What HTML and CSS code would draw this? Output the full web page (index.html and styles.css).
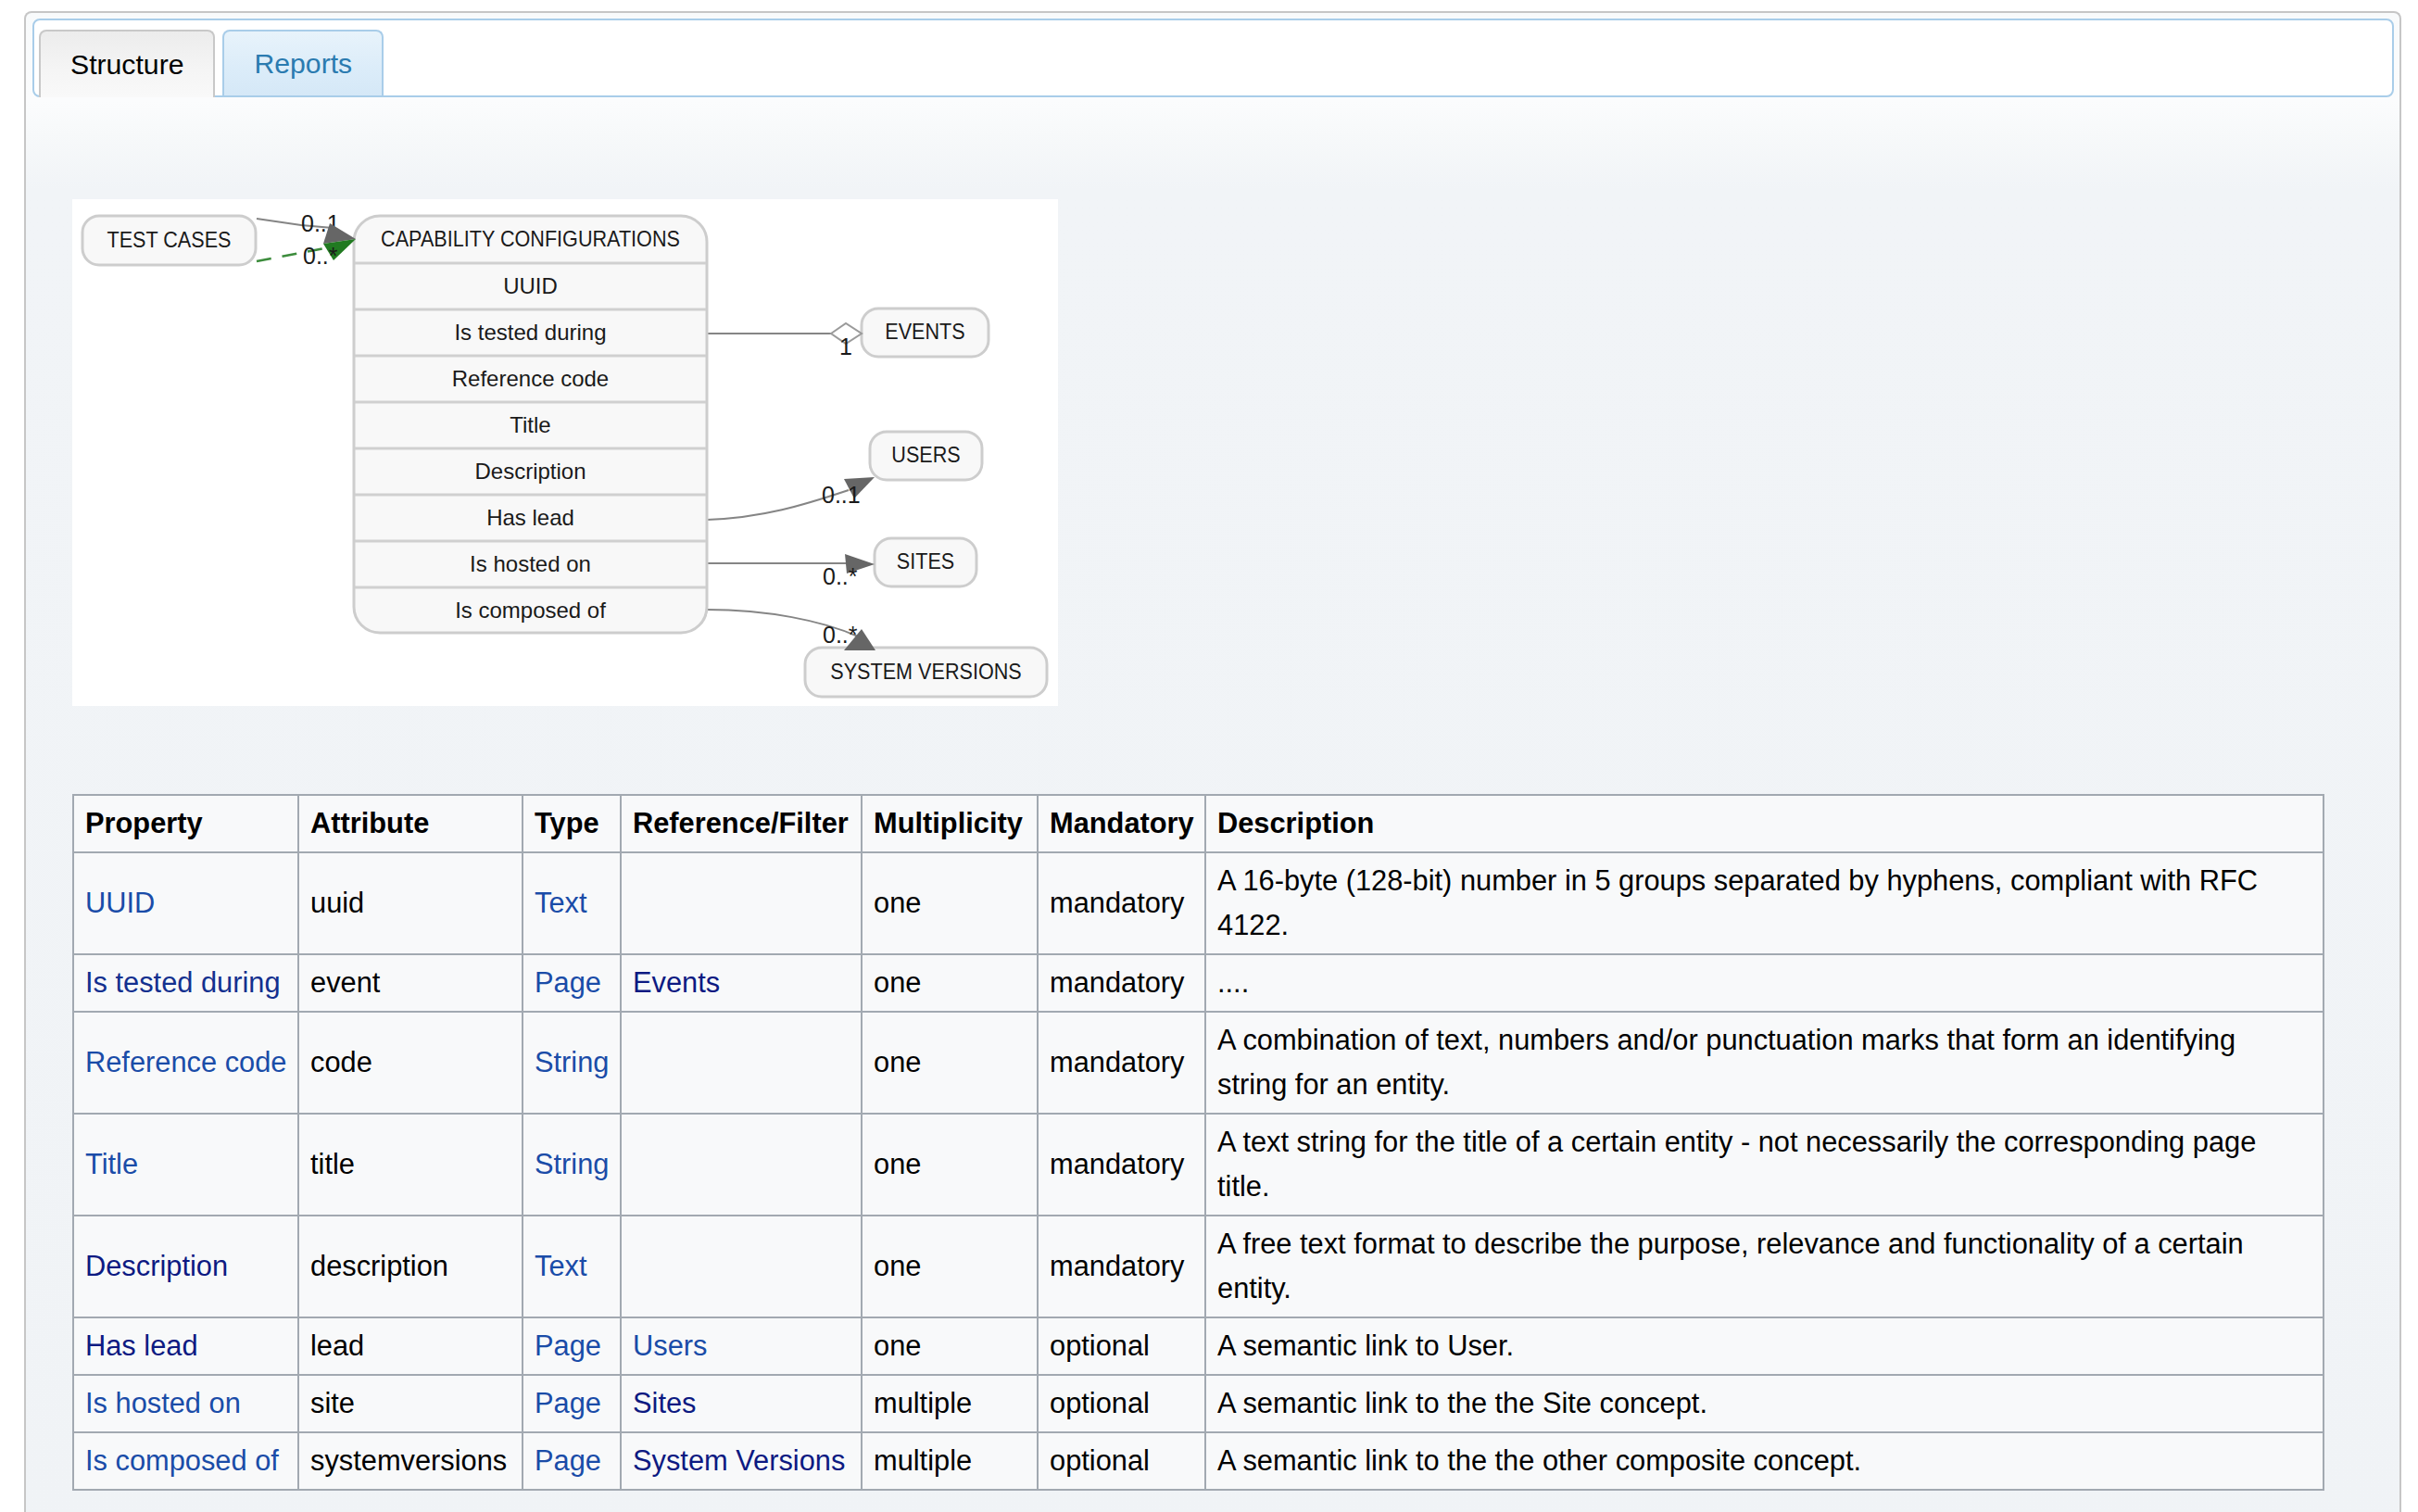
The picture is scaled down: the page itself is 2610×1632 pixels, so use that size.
FILE: index.html
```html
<!DOCTYPE html>
<html lang="en">
<head>
<meta charset="utf-8">
<title>Capability Configurations</title>
<link rel="stylesheet" href="styles.css">
</head>
<body>
<div class="container">
  <div class="tabs-nav">
    <div class="tab tab-active">Structure</div>
    <div class="tab tab-default">Reports</div>
  </div>
  <div class="panel">
    <div class="diagram">
      <svg class="diagram-svg" width="1064" height="547" viewBox="0 0 1064 547" xmlns="http://www.w3.org/2000/svg">
        <!-- edges -->
        <path class="edge" d="M199,21 L247,28 L281,31"/>
        <path class="edge-green" d="M199,67 L272,53"/>
        <path class="edge" d="M685,145 L821,145"/>
        <path class="edge" d="M685,346 C745,344 790,330 838,314"/>
        <path class="edge" d="M685,393 L837,393"/>
        <path class="edge" d="M685,443 C750,443 810,455 848,472"/>

        <!-- TEST CASES -->
        <rect class="node" x="11" y="18" width="187" height="53" rx="18"/>
        <text class="lbl up" x="104.5" y="52" text-anchor="middle">TEST CASES</text>

        <!-- main class -->
        <rect class="node" x="304" y="18" width="381" height="450" rx="28"/>
        <path class="sep" d="M305,69 H684 M305,119 H684 M305,169 H684 M305,219 H684 M305,269 H684 M305,319 H684 M305,369 H684 M305,419 H684"/>
        <text class="lbl up" x="494.5" y="51" text-anchor="middle">CAPABILITY CONFIGURATIONS</text>
        <text class="lbl" x="494.5" y="101.5" text-anchor="middle">UUID</text>
        <text class="lbl" x="494.5" y="151.5" text-anchor="middle">Is tested during</text>
        <text class="lbl" x="494.5" y="201.5" text-anchor="middle">Reference code</text>
        <text class="lbl" x="494.5" y="251.5" text-anchor="middle">Title</text>
        <text class="lbl" x="494.5" y="301.5" text-anchor="middle">Description</text>
        <text class="lbl" x="494.5" y="351.5" text-anchor="middle">Has lead</text>
        <text class="lbl" x="494.5" y="401.5" text-anchor="middle">Is hosted on</text>
        <text class="lbl" x="494.5" y="451.5" text-anchor="middle">Is composed of</text>

        <!-- EVENTS -->
        <rect class="node" x="852" y="118" width="137" height="52" rx="18"/>
        <text class="lbl up" x="920.5" y="151.5" text-anchor="middle">EVENTS</text>
        <!-- USERS -->
        <rect class="node" x="861" y="251" width="121" height="52" rx="18"/>
        <text class="lbl up" x="921.5" y="284.5" text-anchor="middle">USERS</text>
        <!-- SITES -->
        <rect class="node" x="866" y="366" width="110" height="52" rx="18"/>
        <text class="lbl up" x="921" y="399.5" text-anchor="middle">SITES</text>
        <!-- SYSTEM VERSIONS -->
        <rect class="node" x="791" y="484" width="261" height="53" rx="18"/>
        <text class="lbl up" x="921.5" y="518" text-anchor="middle">SYSTEM VERSIONS</text>

        <!-- arrowheads -->
        <polygon class="diamond" points="819,145 835,134 852,145 835,156"/>
        <text class="mult" x="247" y="35">0..1</text>
        <polygon class="head" points="278,26 306,43 271,48"/>
        <polygon class="head-green" points="271,48 306,43 282,66"/>
        <text class="mult" x="249" y="70">0..*</text>
        <text class="mult" x="828" y="168">1</text>
        <polygon class="head" points="833,302 866,300 844,323"/>
        <text class="mult" x="809" y="328">0..1</text>
        <polygon class="head" points="834,383 866,394 836,404"/>
        <text class="mult" x="810" y="416">0..*</text>
        <polygon class="head" points="852,464 867,487 833,487"/>
        <text class="mult" x="810" y="479">0..*</text>
      </svg>
    </div>

    <table class="wikitable">
      <colgroup>
        <col class="c-prop">
        <col class="c-attr">
        <col class="c-type">
        <col class="c-ref">
        <col class="c-mult">
        <col class="c-mand">
        <col class="c-desc">
      </colgroup>
      <thead>
        <tr>
          <th>Property</th>
          <th>Attribute</th>
          <th>Type</th>
          <th>Reference/Filter</th>
          <th>Multiplicity</th>
          <th>Mandatory</th>
          <th>Description</th>
        </tr>
      </thead>
      <tbody>
        <tr>
          <td><a class="link">UUID</a></td>
          <td>uuid</td>
          <td><a class="link">Text</a></td>
          <td></td>
          <td>one</td>
          <td>mandatory</td>
          <td class="desc">A 16-byte (128-bit) number in 5 groups separated by hyphens, compliant with RFC 4122.</td>
        </tr>
        <tr>
          <td><a class="link link-mid">Is tested during</a></td>
          <td>event</td>
          <td><a class="link">Page</a></td>
          <td><a class="link visited">Events</a></td>
          <td>one</td>
          <td>mandatory</td>
          <td class="desc">....</td>
        </tr>
        <tr>
          <td><a class="link">Reference code</a></td>
          <td>code</td>
          <td><a class="link">String</a></td>
          <td></td>
          <td>one</td>
          <td>mandatory</td>
          <td class="desc">A combination of text, numbers and/or punctuation marks that form an identifying string for an entity.</td>
        </tr>
        <tr>
          <td><a class="link">Title</a></td>
          <td>title</td>
          <td><a class="link">String</a></td>
          <td></td>
          <td>one</td>
          <td>mandatory</td>
          <td class="desc">A text string for the title of a certain entity - not necessarily the corresponding page title.</td>
        </tr>
        <tr>
          <td><a class="link visited">Description</a></td>
          <td>description</td>
          <td><a class="link">Text</a></td>
          <td></td>
          <td>one</td>
          <td>mandatory</td>
          <td class="desc">A free text format to describe the purpose, relevance and functionality of a certain entity.</td>
        </tr>
        <tr>
          <td><a class="link visited">Has lead</a></td>
          <td>lead</td>
          <td><a class="link">Page</a></td>
          <td><a class="link">Users</a></td>
          <td>one</td>
          <td>optional</td>
          <td class="desc">A semantic link to User.</td>
        </tr>
        <tr>
          <td><a class="link">Is hosted on</a></td>
          <td>site</td>
          <td><a class="link">Page</a></td>
          <td><a class="link visited">Sites</a></td>
          <td>multiple</td>
          <td>optional</td>
          <td class="desc">A semantic link to the the Site concept.</td>
        </tr>
        <tr>
          <td><a class="link">Is composed of</a></td>
          <td>systemversions</td>
          <td><a class="link">Page</a></td>
          <td><a class="link visited">System Versions</a></td>
          <td>multiple</td>
          <td>optional</td>
          <td class="desc">A semantic link to the the other composite concept.</td>
        </tr>
      </tbody>
    </table>
  </div>
</div>
</body>
</html>
```

FILE: styles.css
```css
html, body {
  margin: 0;
  padding: 0;
  background: #ffffff;
}

body {
  font-family: "Liberation Sans", Arial, Helvetica, sans-serif;
  color: #000000;
}

.container {
  box-sizing: border-box;
  margin: 12px 0 0 26px;
  width: 2566px;
  min-height: 1700px;
  padding: 6px 6px 0 7px;
  border: 2px solid #c6c6c6;
  border-bottom: none;
  border-radius: 8px 8px 0 0;
  background: linear-gradient(to bottom, #f8fafb 0px, #fbfcfd 95px, #f7f9fa 130px, #f1f4f7 190px, #f0f3f6 100%);
}

.tabs-nav {
  box-sizing: border-box;
  display: flex;
  align-items: flex-end;
  gap: 8px;
  height: 85px;
  padding: 0 5px;
  border: 2px solid #a9cde9;
  border-radius: 8px;
  background: #ffffff;
}

.tab {
  box-sizing: border-box;
  display: flex;
  align-items: center;
  padding: 0 32px;
  font-size: 30.2px;
  border: 2px solid;
  border-bottom: none;
  border-radius: 8px 8px 0 0;
}

.tab-active {
  height: 73px;
  margin-bottom: -2px;
  color: #000000;
  border-color: #c8c8c8;
  background: linear-gradient(to bottom, #ececec 0%, #f5f5f5 60%, #f9f9f9 100%);
}

.tab-default {
  height: 71px;
  color: #2b7bb0;
  border-color: #a9cde9;
  background: linear-gradient(to bottom, #e8f3fb 0%, #dbecf9 60%, #d5e8f7 100%);
}

.panel {
  padding: 110px 0 0 43px;
}

.diagram {
  width: 1064px;
  height: 547px;
  background: #ffffff;
}

.diagram-svg {
  display: block;
}

.node {
  fill: #f8f8f8;
  stroke: #cdcdcd;
  stroke-width: 3;
}

.sep {
  stroke: #d0d0d0;
  stroke-width: 3;
  fill: none;
}

.lbl {
  font-family: "Liberation Sans", Arial, sans-serif;
  font-size: 24px;
  fill: #1a1a1a;
}

.up {
  transform: scaleX(0.9);
  transform-box: fill-box;
  transform-origin: center;
}

.mult {
  font-family: "Liberation Sans", Arial, sans-serif;
  font-size: 25px;
  fill: #1a1a1a;
}

.edge {
  fill: none;
  stroke: #858585;
  stroke-width: 2;
}

.edge-green {
  fill: none;
  stroke: #3c8c3c;
  stroke-width: 2.5;
  stroke-dasharray: 16 12;
}

.head {
  fill: #666666;
}

.head-green {
  fill: #217a21;
}

.diamond {
  fill: #ffffff;
  stroke: #9a9a9a;
  stroke-width: 2;
}

.wikitable {
  margin-top: 95px;
  border-collapse: collapse;
  table-layout: fixed;
  width: 2431px;
  font-size: 30.8px;
  line-height: 48px;
  background: #f8f9fa;
  border: 2px solid #a2a9b1;
}

.wikitable th,
.wikitable td {
  border: 2px solid #a2a9b1;
  padding: 6px 12px;
  text-align: left;
  vertical-align: middle;
  background: #f8f9fa;
  white-space: nowrap;
}

.wikitable th {
  font-weight: bold;
  color: #000000;
}

.wikitable td.desc {
  padding-right: 40px;
  white-space: normal;
}

.c-prop { width: 243px; }
.c-attr { width: 242px; }
.c-type { width: 106px; }
.c-ref  { width: 260px; }
.c-mult { width: 190px; }
.c-mand { width: 181px; }
.c-desc { width: 1207px; }

.link {
  color: #1a4ca8;
  text-decoration: none;
}

.link-mid {
  color: #13308f;
}

.visited {
  color: #0d1a82;
}
```
